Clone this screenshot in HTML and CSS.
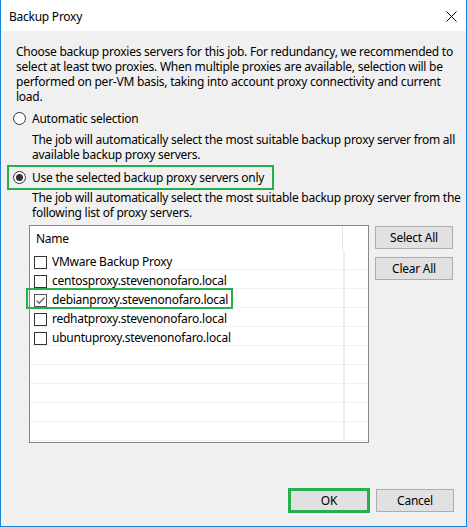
FILE: index.html
```html
<!DOCTYPE html>
<html>
<head>
<meta charset="utf-8">
<link rel="stylesheet" href="styles.css">
</head>
<body>
<div class="window">
  <div class="titlebar">
    <span class="title">Backup Proxy</span>
    <svg class="close" width="11" height="11" viewBox="0 0 11 11"><path d="M0.5 0.5 L10.5 10.5 M10.5 0.5 L0.5 10.5" stroke="#000" stroke-width="1" fill="none"/></svg>
  </div>
  <div class="content">
    <p class="intro">Choose backup proxies servers for this job. For redundancy, we recommended to<br>select at least two proxies. When multiple proxies are available, selection will be<br>performed on per-VM basis, taking into account proxy connectivity and current<br>load.</p>
    <div class="radio-row first">
      <span class="radio"></span><span class="label">Automatic selection</span>
    </div>
    <p class="desc d1">The job will automatically select the most suitable backup proxy server from all<br>available backup proxy servers.</p>
    <div class="radio-row second">
      <span class="radio checked"></span><span class="label">Use the selected backup proxy servers only</span>
    </div>
    <p class="desc d2">The job will automatically select the most suitable backup proxy server from the<br>following list of proxy servers.</p>
    <div class="list-area">
      <div class="list">
        <div class="list-head"><span class="col-name">Name</span><span class="col-sep"></span></div>
        <div class="row"><span class="cb"></span><span class="name">VMware Backup Proxy</span><span class="row-sep"></span></div>
        <div class="row"><span class="cb"></span><span class="name">centosproxy.stevenonofaro.local</span><span class="row-sep"></span></div>
        <div class="row hl-row"><span class="cb checked"><svg width="11" height="11" viewBox="0 0 11 11"><path d="M1.5 5.5 L4.2 8.2 L9.5 2.5" stroke="#666" stroke-width="1.3" fill="none"/></svg></span><span class="name">debianproxy.stevenonofaro.local</span><span class="row-sep"></span><span class="hl"></span></div>
        <div class="row"><span class="cb"></span><span class="name">redhatproxy.stevenonofaro.local</span><span class="row-sep"></span></div>
        <div class="row"><span class="cb"></span><span class="name">ubuntuproxy.stevenonofaro.local</span><span class="row-sep"></span></div>
        <div class="row"><span class="row-sep"></span></div>
        <div class="row"><span class="row-sep"></span></div>
        <div class="row"><span class="row-sep"></span></div>
        <div class="row"><span class="row-sep"></span></div>
        <div class="row"><span class="row-sep"></span></div>
      </div>
      <div class="side-buttons">
        <button class="btn">Select All</button>
        <button class="btn">Clear All</button>
      </div>
    </div>
  </div>
  <div class="footer">
    <button class="btn ok">OK</button>
    <button class="btn">Cancel</button>
  </div>
</div>
</body>
</html>
```

FILE: styles.css
```css
* { box-sizing: border-box; }
html, body { margin: 0; padding: 0; }
body {
  width: 467px;
  height: 527px;
  font-family: "Noto Sans", "Open Sans", sans-serif;
  font-size: 12px;
  letter-spacing: -0.25px;
  color: #000;
  background: #f0f0f0;
}
.window {
  width: 467px;
  height: 527px;
  border-left: 1px solid #1883d7;
  border-right: 1px solid #1883d7;
  border-bottom: 1px solid #1883d7;
  display: flex;
  flex-direction: column;
  background: #f0f0f0;
}
.titlebar {
  height: 31px;
  background: #fff;
  display: flex;
  align-items: center;
  padding-left: 8px;
  padding-right: 9px;
  justify-content: space-between;
}
.title { line-height: 15px; margin-top: 1px; }
.close { margin-top: 1px; }
.content { padding-left: 15px; }
p { margin: 0; line-height: 15px; white-space: nowrap; }
.intro { margin-top: 13px; }
.radio-row {
  display: flex;
  align-items: center;
  height: 16px;
  line-height: 15px;
  white-space: nowrap;
}
.radio-row.first { margin-top: 6px; margin-left: -3px; }
.radio-row.second {
  margin-top: 3px;
  margin-left: -9px;
  width: 267px;
  height: 25px;
  border: 2px solid #22b14c;
  padding-left: 4px;
}
.radio {
  width: 13px;
  height: 13px;
  border: 1px solid #333;
  border-radius: 50%;
  background: #fff;
  display: flex;
  align-items: center;
  justify-content: center;
  flex: none;
}
.radio.checked::after {
  content: "";
  width: 7px;
  height: 7px;
  border-radius: 50%;
  background: #333;
}
.label { margin-left: 6px; }
.desc { margin-left: 16px; }
.d1 { margin-top: 6px; }
.d2 { margin-top: 0px; }
.list-area {
  display: flex;
  gap: 6px;
  margin-left: 13px;
  margin-top: 5px;
  align-items: flex-start;
}
.list {
  width: 340px;
  height: 218px;
  border: 1px solid #828790;
  background: #fff;
  padding-top: 0;
}
.list-head {
  height: 25px;
  position: relative;
  display: flex;
  align-items: center;
  padding-left: 6px;
}
.col-name { line-height: 15px; margin-top: -1px; }
.col-sep {
  position: absolute;
  left: 312px;
  top: 0;
  width: 1px;
  height: 24px;
  background: #e5e5e5;
}
.row {
  height: 19px;
  border-bottom: 1px solid #f0f0f0;
  display: flex;
  align-items: flex-start;
  padding-top: 5px;
  padding-left: 4px;
  position: relative;
  white-space: nowrap;
}
.row-sep {
  position: absolute;
  left: 313px;
  top: 0;
  width: 2px;
  height: 18px;
  background: #eaf0f8;
}
.cb {
  width: 13px;
  height: 13px;
  border: 1px solid #333;
  background: #fff;
  flex: none;
  display: flex;
  align-items: center;
  justify-content: center;
}
.cb.checked { border-color: #555; }
.name { margin-left: 5px; line-height: 15px; margin-top: -2px; }
.hl {
  position: absolute;
  left: -4px;
  top: -1px;
  width: 207px;
  height: 21px;
  border: 2px solid #22b14c;
}
.side-buttons {
  display: flex;
  flex-direction: column;
  gap: 8px;
  margin-top: 1px;
}
.btn {
  width: 78px;
  height: 23px;
  background: #e1e1e1;
  border: 1px solid #adadad;
  font-family: inherit;
  font-size: 12px;
  letter-spacing: -0.25px;
  color: #000;
  padding: 0;
  line-height: 15px;
}
.footer {
  margin-top: auto;
  display: flex;
  justify-content: flex-end;
  align-items: center;
  gap: 6px;
  padding-right: 12px;
  padding-bottom: 13px;
}
.btn.ok {
  width: 82px;
  height: 25px;
  border: 3px solid #22b14c;
}
```
